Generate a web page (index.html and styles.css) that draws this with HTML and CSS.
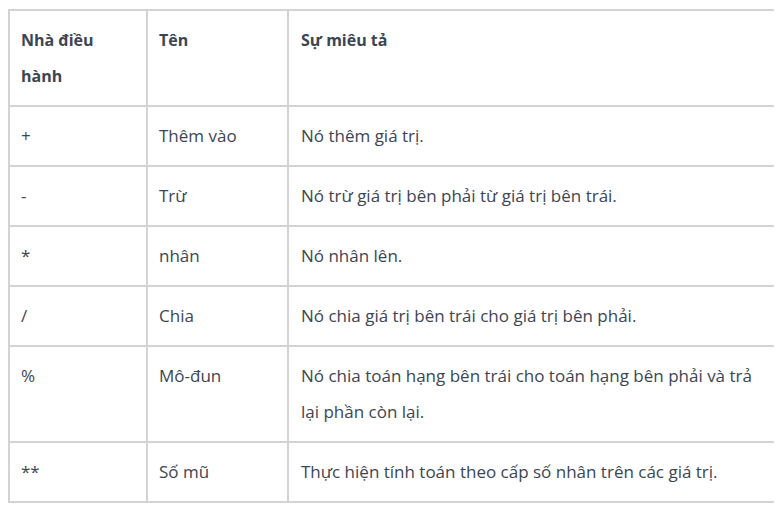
FILE: index.html
```html
<!DOCTYPE html>
<html lang="vi">
<head>
<meta charset="utf-8">
<link rel="stylesheet" href="styles.css">
</head>
<body>
<table class="ops">
  <colgroup>
    <col class="c1"><col class="c2"><col class="c3">
  </colgroup>
  <thead>
    <tr><th>Nhà điều hành</th><th>Tên</th><th>Sự miêu tả</th></tr>
  </thead>
  <tbody>
    <tr><td>+</td><td>Thêm vào</td><td>Nó thêm giá trị.</td></tr>
    <tr><td>-</td><td>Trừ</td><td>Nó trừ giá trị bên phải từ giá trị bên trái.</td></tr>
    <tr><td>*</td><td>nhân</td><td>Nó nhân lên.</td></tr>
    <tr><td>/</td><td>Chia</td><td>Nó chia giá trị bên trái cho giá trị bên phải.</td></tr>
    <tr><td>%</td><td>Mô-đun</td><td>Nó chia toán hạng bên trái cho toán hạng bên phải và trả lại phần còn lại.</td></tr>
    <tr><td>**</td><td>Số mũ</td><td>Thực hiện tính toán theo cấp số nhân trên các giá trị.</td></tr>
  </tbody>
</table>
</body>
</html>
```
FILE: styles.css
```css
html, body {
  background: #ffffff;
}
body {
  margin: 9px 8px 8px 8px;
  font-family: "Open Sans", Lato, sans-serif;
  font-size: 16px;
  color: #3c4553;
}
.ops {
  width: 768px;
  table-layout: fixed;
  border-collapse: separate;
  border-spacing: 0;
  border-top: 2px solid #d3d3d3;
  border-left: 2px solid #d3d3d3;
}
.c1 { width: 138px; }
.c2 { width: 141px; }
.ops th,
.ops td {
  box-sizing: border-box;
  border-right: 2px solid #d3d3d3;
  border-bottom: 2px solid #d3d3d3;
  padding: 11px;
  line-height: 36px;
  text-align: left;
  vertical-align: top;
}
.ops th {
  font-size: 16px;
  font-weight: 700;
}
.ops td {
  font-size: 17px;
  font-weight: 400;
}
.ops td:nth-child(3),
.ops th:nth-child(3) {
  padding-left: 12px;
}
```
